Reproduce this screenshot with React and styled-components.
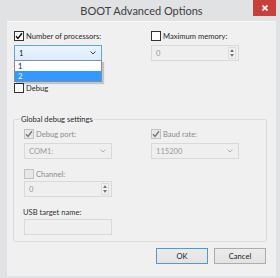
import React from 'react';
import styled, { createGlobalStyle } from 'styled-components';

const GlobalStyle = createGlobalStyle`
  html, body { margin: 0; padding: 0; background: #e1e2e4; }
  body {
    font-family: Lato, "Noto Sans", sans-serif;
    color: #222;
  }
  * { box-sizing: border-box; }
`;

const TEXT = 7.6;

const Window = styled.div`
  width: 280px;
  height: 278px;
  display: flex;
  flex-direction: column;
  background: #e1e2e4;
  padding: 0 4px 2px 7px;
`;

const TitleBar = styled.div`
  height: 21px;
  display: grid;
  grid-template-columns: 23px 1fr 23px;
  align-items: start;
`;

const Title = styled.div`
  grid-column: 2;
  text-align: center;
  font-size: 11px;
  line-height: 22px;
  color: #404040;
`;

const CloseButton = styled.div`
  grid-column: 3;
  height: 16px;
  background: #c8403b;
  color: #fff;
  display: flex;
  align-items: center;
  justify-content: center;
`;

const Body = styled.div`
  flex: 1;
  background: #f0f0f0;
  border-top: 1px solid #f7f7f7;
  padding: 9px 10px 0 6px;
  display: flex;
  flex-direction: column;
`;

const TopGrid = styled.div`
  display: grid;
  grid-template-columns: 137px 1fr;
  padding-left: 1px;
`;

const Column = styled.div`
  display: flex;
  flex-direction: column;
  align-items: flex-start;
`;

const CheckRow = styled.label`
  display: flex;
  align-items: center;
  gap: 2px;
  height: 10px;
  margin-top: ${p => p.$mt || 0}px;
  font-size: ${TEXT}px;
  color: ${p => (p.$disabled ? '#8c8c8c' : '#2a2a2a')};
  white-space: nowrap;
`;

const Box = styled.span`
  width: 10px;
  height: 10px;
  border: 1px solid ${p => (p.$disabled ? '#c2c2c2' : '#333')};
  background: ${p => (p.$disabled ? '#e8e8e8' : '#fff')};
  display: flex;
  align-items: center;
  justify-content: center;
  flex-shrink: 0;
`;

const Field = styled.div`
  position: relative;
  width: ${p => p.$w || 88}px;
  height: 16px;
  margin-top: ${p => p.$mt || 0}px;
  border: 1px solid ${p => (p.$open ? '#62a6e6' : '#d9d9d9')};
  background: ${p => (p.$open ? 'linear-gradient(#eaf4fc, #dcecfc)' : '#efefef')};
  display: flex;
  align-items: center;
  padding: 0 5px 0 4px;
  font-size: ${TEXT}px;
  color: ${p => (p.$open ? '#111' : '#9a9a9a')};
`;

const FieldText = styled.span`
  flex: 1;
`;

const SpinButtons = styled.span`
  width: 8px;
  height: 12px;
  margin-right: -3px;
  border: 1px solid #dcdcdc;
  background: #f3f3f3;
  display: flex;
  flex-direction: column;
  align-items: center;
  justify-content: space-evenly;
`;

const DropList = styled.div`
  position: absolute;
  left: -1px;
  top: 14px;
  width: calc(100% + 2px);
  border: 1px solid #7f8fa6;
  background: #fff;
  box-shadow: 2px 2px 1px rgba(0, 0, 0, 0.18);
  z-index: 2;
`;

const DropItem = styled.div`
  height: 10px;
  line-height: 10px;
  padding-left: 3px;
  font-size: ${TEXT}px;
  background: ${p => (p.$selected ? '#3399ff' : '#fff')};
  color: ${p => (p.$selected ? '#fff' : '#111')};
`;

const GroupBox = styled.div`
  margin-top: 26px;
  width: 254px;
  height: 123px;
  border: 1px solid #dcdcdc;
  border-radius: 2px;
  display: flex;
  flex-direction: column;
  padding: 0 0 0 10px;
`;

const Legend = styled.div`
  align-self: flex-start;
  margin: -6px 0 0 -4px;
  padding: 0 1px;
  background: #f0f0f0;
  font-size: ${TEXT}px;
  line-height: 10px;
  color: #2a2a2a;
`;

const GroupGrid = styled.div`
  display: grid;
  grid-template-columns: 127px 1fr;
  margin-top: 5px;
`;

const FieldLabel = styled.div`
  font-size: ${TEXT}px;
  line-height: 10px;
  margin: 10px 0 0 -1px;
  color: #333;
`;

const ButtonRow = styled.div`
  display: flex;
  justify-content: flex-end;
  gap: 6px;
  margin-top: 6px;
`;

const Button = styled.div`
  width: 52px;
  height: 16px;
  border: 1px solid ${p => (p.$default ? '#4a9be0' : '#adadad')};
  background: linear-gradient(#ececec, #e3e3e3);
  display: flex;
  align-items: center;
  justify-content: center;
  font-size: ${TEXT}px;
  color: #222;
`;

const Check = ({ disabled }) => (
  <svg width="8" height="8" viewBox="0 0 8 8">
    <polyline
      points="1,4.2 3,6.4 7,1.2"
      fill="none"
      stroke={disabled ? '#7a7a7a' : '#111'}
      strokeWidth="1.5"
    />
  </svg>
);

const Chevron = ({ color }) => (
  <svg width="6" height="4" viewBox="0 0 6 4">
    <polyline points="0.5,0.5 3,3 5.5,0.5" fill="none" stroke={color} strokeWidth="1" />
  </svg>
);

const Arrows = () => (
  <SpinButtons>
    <svg width="4" height="3" viewBox="0 0 4 3"><polygon points="0,3 2,0 4,3" fill="#777" /></svg>
    <svg width="4" height="3" viewBox="0 0 4 3"><polygon points="0,0 4,0 2,3" fill="#777" /></svg>
  </SpinButtons>
);

function CheckOption({ checked, disabled, mt, children }) {
  return (
    <CheckRow $disabled={disabled} $mt={mt}>
      <Box $disabled={disabled}>{checked && <Check disabled={disabled} />}</Box>
      {children}
    </CheckRow>
  );
}

export default function App() {
  return (
    <>
      <GlobalStyle />
      <Window>
        <TitleBar>
          <Title>BOOT Advanced Options</Title>
          <CloseButton>
            <svg width="6" height="6" viewBox="0 0 6 6">
              <path d="M0.5 0.5 L5.5 5.5 M5.5 0.5 L0.5 5.5" stroke="#fff" strokeWidth="1.6" />
            </svg>
          </CloseButton>
        </TitleBar>
        <Body>
          <TopGrid>
            <Column>
              <CheckOption checked>Number of processors:</CheckOption>
              <Field $open $mt={4}>
                <FieldText>1</FieldText>
                <Chevron color="#444" />
                <DropList>
                  <DropItem>1</DropItem>
                  <DropItem $selected>2</DropItem>
                </DropList>
              </Field>
              <CheckOption mt={22}>Debug</CheckOption>
            </Column>
            <Column>
              <CheckOption>Maximum memory:</CheckOption>
              <Field $mt={4}>
                <FieldText>0</FieldText>
                <Arrows />
              </Field>
            </Column>
          </TopGrid>
          <GroupBox>
            <Legend>Global debug settings</Legend>
            <GroupGrid>
              <Column>
                <CheckOption checked disabled>Debug port:</CheckOption>
                <Field $mt={4}>
                  <FieldText>COM1:</FieldText>
                  <Chevron color="#b0b0b0" />
                </Field>
                <CheckOption disabled mt={10}>Channel:</CheckOption>
                <Field $mt={2}>
                  <FieldText>0</FieldText>
                  <Arrows />
                </Field>
                <FieldLabel>USB target name:</FieldLabel>
                <Field $mt={2} />
              </Column>
              <Column>
                <CheckOption checked disabled>Baud rate:</CheckOption>
                <Field $mt={4}>
                  <FieldText>115200</FieldText>
                  <Chevron color="#b0b0b0" />
                </Field>
              </Column>
            </GroupGrid>
          </GroupBox>
          <ButtonRow>
            <Button $default>OK</Button>
            <Button>Cancel</Button>
          </ButtonRow>
        </Body>
      </Window>
    </>
  );
}
